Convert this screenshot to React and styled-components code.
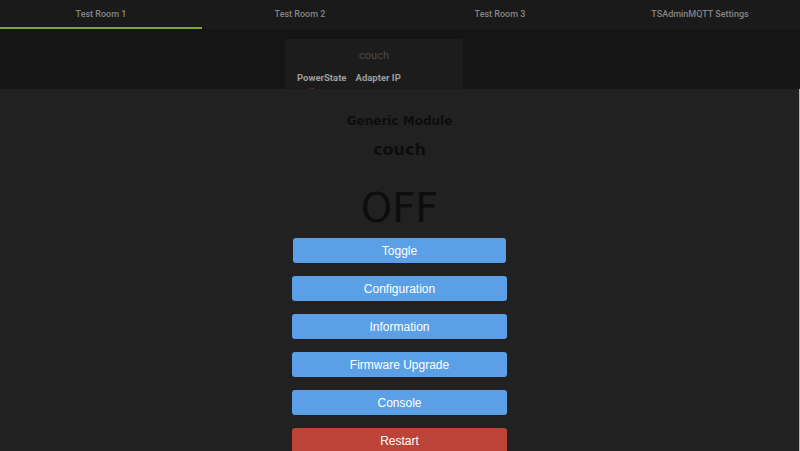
import styled, { createGlobalStyle } from 'styled-components';

const GlobalStyle = createGlobalStyle`
  html, body {
    margin: 0;
    padding: 0;
    background: #151515;
    overflow: hidden;
  }
  body {
    font-family: Roboto, "Liberation Sans", sans-serif;
  }
`;

const tabs = ['Test Room 1', 'Test Room 2', 'Test Room 3', 'TSAdminMQTT Settings'];
const actions = ['Configuration', 'Information', 'Firmware Upgrade', 'Console'];

const App = () => {
  return (
    <Page>
      <GlobalStyle />
      <TabBar>
        {tabs.map((t, i) => (
          <Tab key={t} $active={i === 0}>{t}</Tab>
        ))}
      </TabBar>

      <Dashboard>
        <DeviceCard>
          <CardTitle>couch</CardTitle>
          <CardTable>
            <CardHead>PowerState</CardHead>
            <CardHead>Adapter IP</CardHead>
            <CardValue $red>off</CardValue>
            <CardValue />
          </CardTable>
        </DeviceCard>
      </Dashboard>

      <Overlay>
        <ModuleType>Generic Module</ModuleType>
        <ModuleName>couch</ModuleName>
        <PowerState>OFF</PowerState>
        <Actions>
          <ActionButton $narrow>Toggle</ActionButton>
          {actions.map((a) => (
            <ActionButton key={a}>{a}</ActionButton>
          ))}
          <ActionButton $danger>Restart</ActionButton>
        </Actions>
      </Overlay>
    </Page>
  );
};

const Page = styled.div`
  position: relative;
  width: 800px;
  height: 451px;
  overflow: hidden;
  background: #151515;
`;

const TabBar = styled.nav`
  display: grid;
  grid-template-columns: repeat(4, 1fr);
  height: 29px;
  background: #1a1a1a;
`;

const Tab = styled.div`
  display: flex;
  align-items: center;
  justify-content: center;
  font-size: 9px;
  font-weight: 500;
  color: #858585;
  border-bottom: 2px solid ${({ $active }) => ($active ? '#7aa83a' : 'transparent')};
  margin-right: ${({ $active }) => ($active ? '-2px' : '0')};
`;

const Dashboard = styled.section`
  display: flex;
  justify-content: center;
  padding-top: 10px;
  padding-right: 52px;
`;

const DeviceCard = styled.div`
  width: 178px;
  background: #1c1c1c;
  border-radius: 2px;
  padding: 10px 12px;
  box-sizing: border-box;
`;

const CardTitle = styled.div`
  text-align: center;
  font-size: 11px;
  color: #4a4a4a;
  margin-bottom: 10px;
`;

const CardTable = styled.div`
  display: grid;
  grid-template-columns: auto auto;
  justify-content: start;
  column-gap: 9px;
  row-gap: 3px;
`;

const CardHead = styled.div`
  font-size: 9.5px;
  font-weight: 700;
  color: #9c9c9c;
`;

const CardValue = styled.div`
  font-size: 9.5px;
  padding-left: 5px;
  color: ${({ $red }) => ($red ? '#8a2c2c' : '#777')};
`;

const Overlay = styled.div`
  position: absolute;
  top: 89px;
  left: 0;
  right: 0;
  bottom: 0;
  background: #212121;
  border-right: 1px solid #b5b5b5;
  display: flex;
  flex-direction: column;
  align-items: center;
  font-family: "DejaVu Sans", Verdana, sans-serif;
  color: #0d0d0d;
`;

const ModuleType = styled.h2`
  margin: 25px 0 0;
  font-size: 12px;
  font-weight: 700;
`;

const ModuleName = styled.h1`
  margin: 12px 0 0;
  font-size: 16px;
  font-weight: 700;
`;

const PowerState = styled.div`
  margin-top: 27px;
  font-size: 40px;
  line-height: 44px;
`;

const Actions = styled.div`
  margin-top: 8px;
  display: flex;
  flex-direction: column;
  align-items: center;
  gap: 13px;
`;

const ActionButton = styled.button`
  width: ${({ $narrow }) => ($narrow ? '213px' : '215px')};
  height: 25px;
  border: none;
  border-radius: 3px;
  background: ${({ $danger }) => ($danger ? '#bd4338' : '#5b9fe6')};
  color: #ffffff;
  font-family: "Liberation Sans", Arial, sans-serif;
  font-size: 12px;
  padding: 0;
  cursor: pointer;
`;

export default App;
